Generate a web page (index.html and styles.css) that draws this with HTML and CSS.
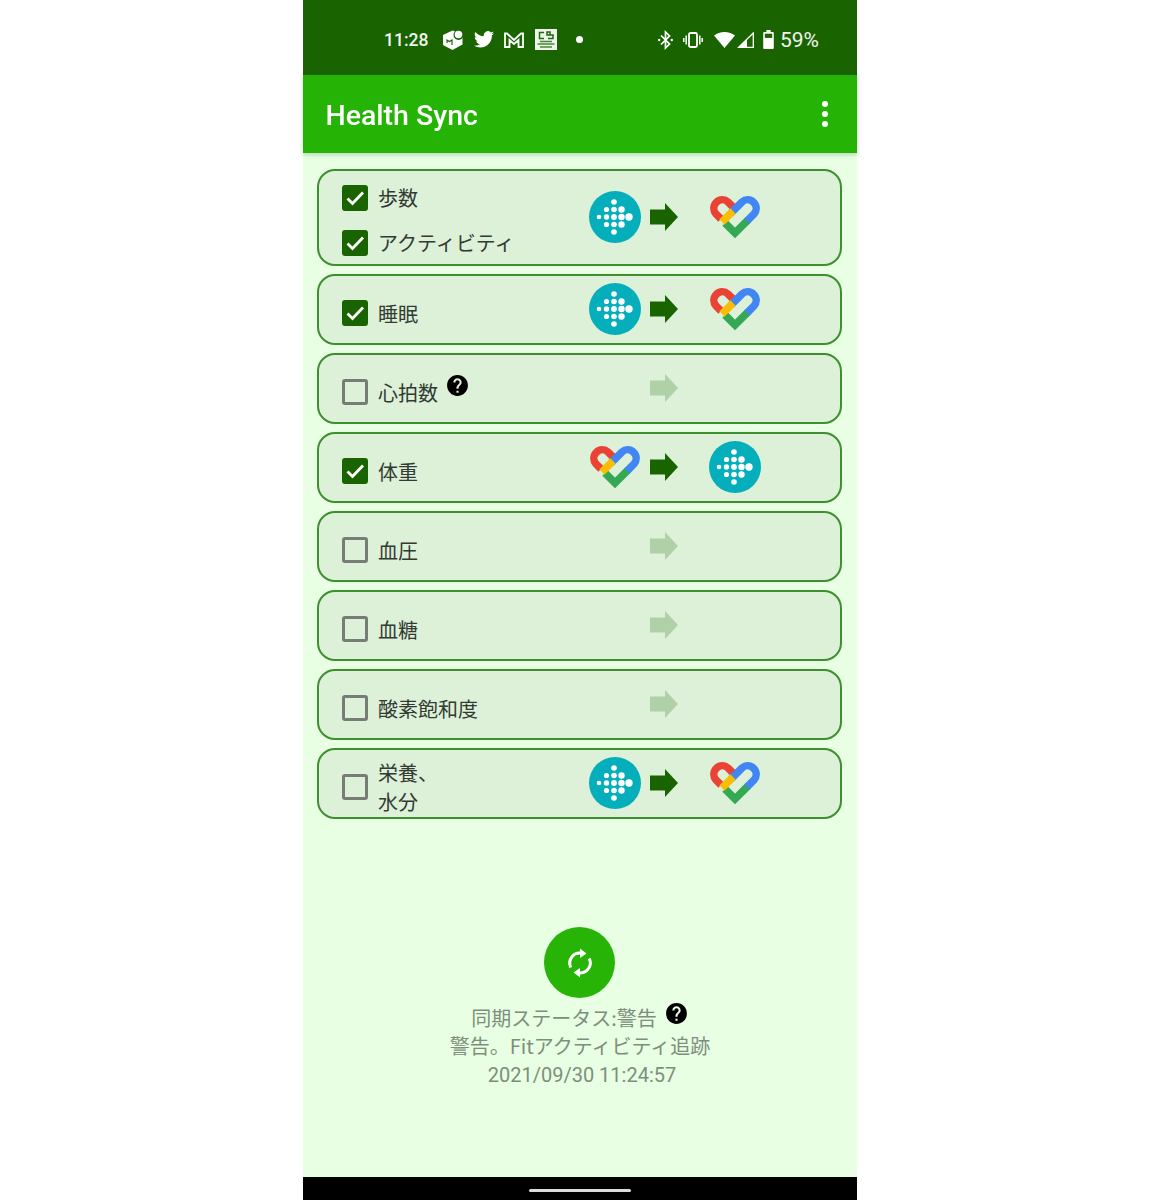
FILE: index.html
```html
<!DOCTYPE html>
<html lang="ja">
<head>
<meta charset="utf-8">
<title>Health Sync</title>
<link rel="stylesheet" href="styles.css">
</head>
<body>
<svg class="defs" width="0" height="0" aria-hidden="true">
  <symbol id="fitbit" viewBox="0 0 52 52">
    <circle cx="26" cy="26" r="26" fill="#04aebb"/>
    <g fill="#fff">
      <circle cx="10" cy="26" r="2.300"/>
      <circle cx="17.500" cy="18.500" r="2.600"/><circle cx="17.500" cy="26" r="2.700"/><circle cx="17.500" cy="33.500" r="2.600"/>
      <circle cx="25" cy="11" r="2.800"/><circle cx="25" cy="18.500" r="2.800"/><circle cx="25" cy="26" r="2.900"/><circle cx="25" cy="33.500" r="2.800"/><circle cx="25" cy="41" r="2.800"/>
      <circle cx="32.500" cy="18.500" r="3.200"/><circle cx="32.500" cy="26" r="3.200"/><circle cx="32.500" cy="33.500" r="3.200"/>
      <circle cx="40" cy="26" r="3.700"/>
    </g>
  </symbol>
  <symbol id="heart" viewBox="0 0 50 43">
    <g fill="none" stroke-width="7.500">
      <path stroke="#ea4335" d="M11 23 6 18A8.500 8.500 0 0 1 18 6L26 14"/>
      <path stroke="#34a853" d="M38 24 25 37 15 27"/>
      <path stroke="#4285f4" d="M21 17 32 6A8.500 8.500 0 0 1 44 18L37 25"/>
      <path stroke="#fbbc04" d="M12 26 23 15"/>
    </g>
  </symbol>
  <symbol id="arrow" viewBox="0 0 28 28">
    <path fill="#196400" d="M0 6.500H15V0L28 14 15 28V21.500H0Z"/>
  </symbol>
  <symbol id="help" viewBox="0 0 24 24">
    <path d="M12 2C6.480 2 2 6.480 2 12s4.480 10 10 10 10-4.480 10-10S17.520 2 12 2zm1 17h-2v-2h2v2zm2.070-7.750l-.9.920C13.450 12.900 13 13.500 13 15h-2v-.5c0-1.100.45-2.100 1.170-2.830l1.240-1.260c.37-.36.59-.86.59-1.410 0-1.100-.9-2-2-2s-2 .9-2 2H8c0-2.210 1.790-4 4-4s4 1.790 4 4c0 .88-.36 1.680-.93 2.250z"/>
  </symbol>
  <symbol id="tick" viewBox="0 0 26 26">
    <path fill="none" stroke="#fff" stroke-width="2.800" d="M5.500 13.500 10.500 18.500 21 7.500"/>
  </symbol>
</svg>

<main class="phone">
  <header class="status">
    <div class="status-left">
      <span class="clock">11:28</span>
      <svg class="si" width="22" height="22" viewBox="0 0 22 22"><path fill="#fff" d="M10.500 1.500 20.500 5V15.500L10.500 21 1 16V6Z"/><circle cx="16.500" cy="6" r="5" fill="#196400"/><circle cx="16.500" cy="5.500" r="3.800" fill="#fff"/><path fill="none" stroke="#196400" stroke-width="1.200" d="M5 14V11L7.500 12.500 10 11V16"/></svg>
      <svg class="si" width="20" height="17" viewBox="0 0 24 20"><path fill="#fff" d="M24 2.400a9.800 9.800 0 0 1-2.800.8A4.900 4.900 0 0 0 23.300.5a9.800 9.800 0 0 1-3.100 1.200 4.900 4.900 0 0 0-8.400 4.500A14 14 0 0 1 1.700 1a4.900 4.900 0 0 0 1.500 6.600 4.900 4.900 0 0 1-2.200-.6 4.900 4.900 0 0 0 3.900 4.900 4.900 4.900 0 0 1-2.200.1 4.900 4.900 0 0 0 4.600 3.400A9.900 9.900 0 0 1 0 17.400 14 14 0 0 0 7.500 19.600c9.100 0 14.300-7.700 14-14.600A10 10 0 0 0 24 2.400z"/></svg>
      <svg class="si" width="20" height="16" viewBox="0 0 20 16"><path fill="none" stroke="#fff" stroke-width="1.800" d="M1 15V1.500H3L10 8 17 1.500H19V15H14.500V8L10 12 5.500 8V15Z"/></svg>
      <svg class="si news" width="22" height="21" viewBox="0 0 22 21"><rect width="22" height="21" fill="#eef4ec"/><path fill="none" stroke="#1f6a0c" stroke-width="1.500" d="M9 3.500H4.500V9.500H9M12 3H15V6H12ZM15 6H18V9.500H13"/><path fill="none" stroke="#4a8a38" stroke-width="1.500" d="M5 12.500H17M2.500 15H19.500M5 18H17"/></svg>
      <span class="dot"></span>
    </div>
    <div class="status-right">
      <svg class="si" width="15" height="20" viewBox="0 0 15 20"><path fill="none" stroke="#fff" stroke-width="1.700" d="M3 5.500 11.500 14 7.500 18V2L11.500 6 3 14.500"/><circle cx="1.200" cy="10" r="1.200" fill="#fff"/><circle cx="13.800" cy="10" r="1.200" fill="#fff"/></svg>
      <svg class="si" width="20" height="16" viewBox="0 0 20 16"><rect x="6" y="1" width="8" height="14" rx="1.500" fill="none" stroke="#fff" stroke-width="1.800"/><path fill="none" stroke="#fff" stroke-width="1.500" d="M3.200 3.500V12.500M.8 6V10M16.800 3.500V12.500M19.200 6V10"/></svg>
      <svg class="si wifi" width="21" height="16" viewBox="0 0 21 16"><path fill="#fff" d="M10.500 16 0 3.600C3 1.300 6.500 0 10.500 0S18 1.300 21 3.600Z"/></svg>
      <svg class="si signal" width="17" height="16" viewBox="0 0 17 16"><path fill="none" stroke="#fff" stroke-width="1.300" d="M1.700 15.300 16.300 1V15.300Z"/><path fill="#fff" d="M1 16 10 7V16Z"/></svg>
      <svg class="si batt" width="11" height="19" viewBox="0 0 10 18"><path fill="#fff" d="M3 0H7V2H9A1 1 0 0 1 10 3V17A1 1 0 0 1 9 18H1A1 1 0 0 1 0 17V3A1 1 0 0 1 1 2H3Z"/><rect x="1.500" y="3.500" width="7" height="4" fill="#196400"/></svg>
      <span class="pct">59%</span>
    </div>
  </header>

  <div class="appbar">
    <h1 class="title">Health Sync</h1>
    <div class="menu"><span></span><span></span><span></span></div>
  </div>

  <section class="list">
    <article class="card card-tall">
      <div class="labels labels-pair">
        <label class="row"><span class="box on"><svg width="26" height="26"><use href="#tick"/></svg></span>歩数</label>
        <label class="row"><span class="box on"><svg width="26" height="26"><use href="#tick"/></svg></span>アクティビティ</label>
      </div>
      <svg class="ic-fit"><use href="#fitbit"/></svg>
      <svg class="ic-arrow"><use href="#arrow"/></svg>
      <svg class="ic-heart"><use href="#heart"/></svg>
    </article>
    <article class="card">
      <div class="labels"><label class="row"><span class="box on"><svg width="26" height="26"><use href="#tick"/></svg></span>睡眠</label></div>
      <svg class="ic-fit"><use href="#fitbit"/></svg>
      <svg class="ic-arrow"><use href="#arrow"/></svg>
      <svg class="ic-heart"><use href="#heart"/></svg>
    </article>
    <article class="card">
      <div class="labels"><label class="row"><span class="box"></span>心拍数<svg class="help"><use href="#help"/></svg></label></div>
      <span class="slot"></span>
      <svg class="ic-arrow off"><use href="#arrow"/></svg>
    </article>
    <article class="card">
      <div class="labels"><label class="row"><span class="box on"><svg width="26" height="26"><use href="#tick"/></svg></span>体重</label></div>
      <svg class="ic-heart"><use href="#heart"/></svg>
      <svg class="ic-arrow"><use href="#arrow"/></svg>
      <svg class="ic-fit"><use href="#fitbit"/></svg>
    </article>
    <article class="card">
      <div class="labels"><label class="row"><span class="box"></span>血圧</label></div>
      <span class="slot"></span>
      <svg class="ic-arrow off"><use href="#arrow"/></svg>
    </article>
    <article class="card">
      <div class="labels"><label class="row"><span class="box"></span>血糖</label></div>
      <span class="slot"></span>
      <svg class="ic-arrow off"><use href="#arrow"/></svg>
    </article>
    <article class="card">
      <div class="labels"><label class="row"><span class="box"></span>酸素飽和度</label></div>
      <span class="slot"></span>
      <svg class="ic-arrow off"><use href="#arrow"/></svg>
    </article>
    <article class="card">
      <div class="labels"><label class="row row-wrap"><span class="box"></span><span class="two-line">栄養、<br>水分</span></label></div>
      <svg class="ic-fit"><use href="#fitbit"/></svg>
      <svg class="ic-arrow"><use href="#arrow"/></svg>
      <svg class="ic-heart"><use href="#heart"/></svg>
    </article>
  </section>

  <section class="sync">
    <button class="sync-btn" type="button" aria-label="同期">
      <svg width="32" height="32" viewBox="0 0 32 32"><g fill="none" stroke="#fff" stroke-width="3"><path d="M6.800 20.500A10 10 0 0 1 17.500 6.200"/><path d="M25.200 11.500A10 10 0 0 1 14.500 25.800"/></g><path fill="#fff" d="M16 1.500 22.500 6.500 16 11ZM16 30.500 9.500 25.500 16 21Z"/></svg>
    </button>
    <p class="sync-line sync-first">同期ステータス:警告<svg class="help help-status"><use href="#help"/></svg></p>
    <p class="sync-line sync-second">警告。Fitアクティビティ追跡</p>
    <p class="sync-line sync-date">2021/09/30 11:24:57</p>
  </section>

  <footer class="navbar"><span class="home"></span></footer>
</main>
</body>
</html>
```

FILE: styles.css
```css
* { box-sizing: border-box; }
html, body { margin: 0; padding: 0; background: #fff; }
body { height: 1200px; overflow: hidden; font-family: "Noto Sans CJK JP", Roboto, sans-serif; }
.defs { display: block; width: 0; height: 0; }

.phone {
  width: 554px;
  height: 1200px;
  margin-left: 303px;
  display: flex;
  flex-direction: column;
  background: #e8ffe4;
  filter: blur(0.6px);
}

.status {
  height: 75px;
  flex: none;
  background: #196400;
  display: flex;
  justify-content: space-between;
  align-items: center;
  padding: 4px 38px 0 81px;
  color: #fff;
  font-family: Roboto, sans-serif;
}
.status-left, .status-right { display: flex; align-items: center; }
.status-left { gap: 10px; }
.status-right { gap: 10px; }
.clock { margin-right: 4px; color: #f2f6f0; font-size: 17.5px; font-weight: 500; }
.si { display: block; flex: none; }
.news { margin-left: 1px; }
.dot { width: 7px; height: 7px; margin-left: 9px; border-radius: 50%; background: #fff; }
.wifi { margin-left: 1px; }
.signal { margin-left: -8px; }
.batt { margin-left: -1px; }
.pct { margin-left: -4px; color: #f2f6f0; font-size: 21px; }

.appbar {
  height: 78px;
  flex: none;
  background: #25b405;
  box-shadow: 0 2px 4px rgba(40, 120, 30, 0.25);
  display: flex;
  justify-content: space-between;
  align-items: center;
  padding: 4px 29px 0 22.5px;
  position: relative;
}
.title { margin: 0; color: #fff; font: 500 28.5px/1 Roboto, sans-serif; }
.menu { display: flex; flex-direction: column; gap: 4px; margin-top: -4px; }
.menu span { width: 6px; height: 6px; border-radius: 50%; background: #fff; }

.list { display: flex; flex-direction: column; gap: 8px; padding: 15.5px 15px 0 14px; flex: none; }
.card {
  height: 71px;
  border: 2px solid #3e8f2f;
  border-radius: 18px;
  background: #dcf1d8;
  display: grid;
  grid-template-columns: 267px 58px 40px 102px;
  align-items: center;
  justify-items: center;
}
.card-tall { height: 97px; }
.labels { justify-self: stretch; padding: 8px 0 0 23px; }
.labels-pair { padding-top: 6.5px; display: flex; flex-direction: column; gap: 11px; }
.row { display: flex; align-items: center; gap: 10px; height: 34px; font-size: 20px; color: #333a33; white-space: nowrap; }
.box { width: 26px; height: 26px; flex: none; border: 3px solid #777d76; border-radius: 3px; }
.box.on { background: #196400; border: 0; }
.box svg { display: block; }
.help { width: 25px; height: 25px; fill: #000; margin: -13px 0 0 -3px; flex: none; }
.two-line { line-height: 29px; margin-top: -1px; display: block; }

.ic-fit { width: 52px; height: 52px; }
.ic-heart { width: 50px; height: 43px; }
.ic-arrow { width: 28px; height: 28px; }
.off { opacity: 0.22; }
.slot { display: block; }

.sync { flex: 1; display: flex; flex-direction: column; align-items: center; padding-top: 108.5px; color: #7f8e7c; font-size: 20px; }
.sync-btn {
  width: 71px; height: 71px; flex: none; padding: 0; border: 0; border-radius: 50%; margin-left: -1px;
  background: #27b406; display: flex; align-items: center; justify-content: center;
}
.sync-line { margin: 0; height: 29px; line-height: 29px; white-space: nowrap; }
.sync-first { margin-top: 5px; display: flex; align-items: center; }
.sync-second { margin-top: -1px; }
.help-status { margin: -8px 0 0 7px; }
.sync-date { margin: 1px 0 0 4px; font-family: Roboto, sans-serif; }

.navbar { height: 23px; flex: none; background: #000; display: flex; justify-content: center; padding-top: 12px; }
.home { width: 102px; height: 3px; border-radius: 2px; background: #dcdcdc; }
```
